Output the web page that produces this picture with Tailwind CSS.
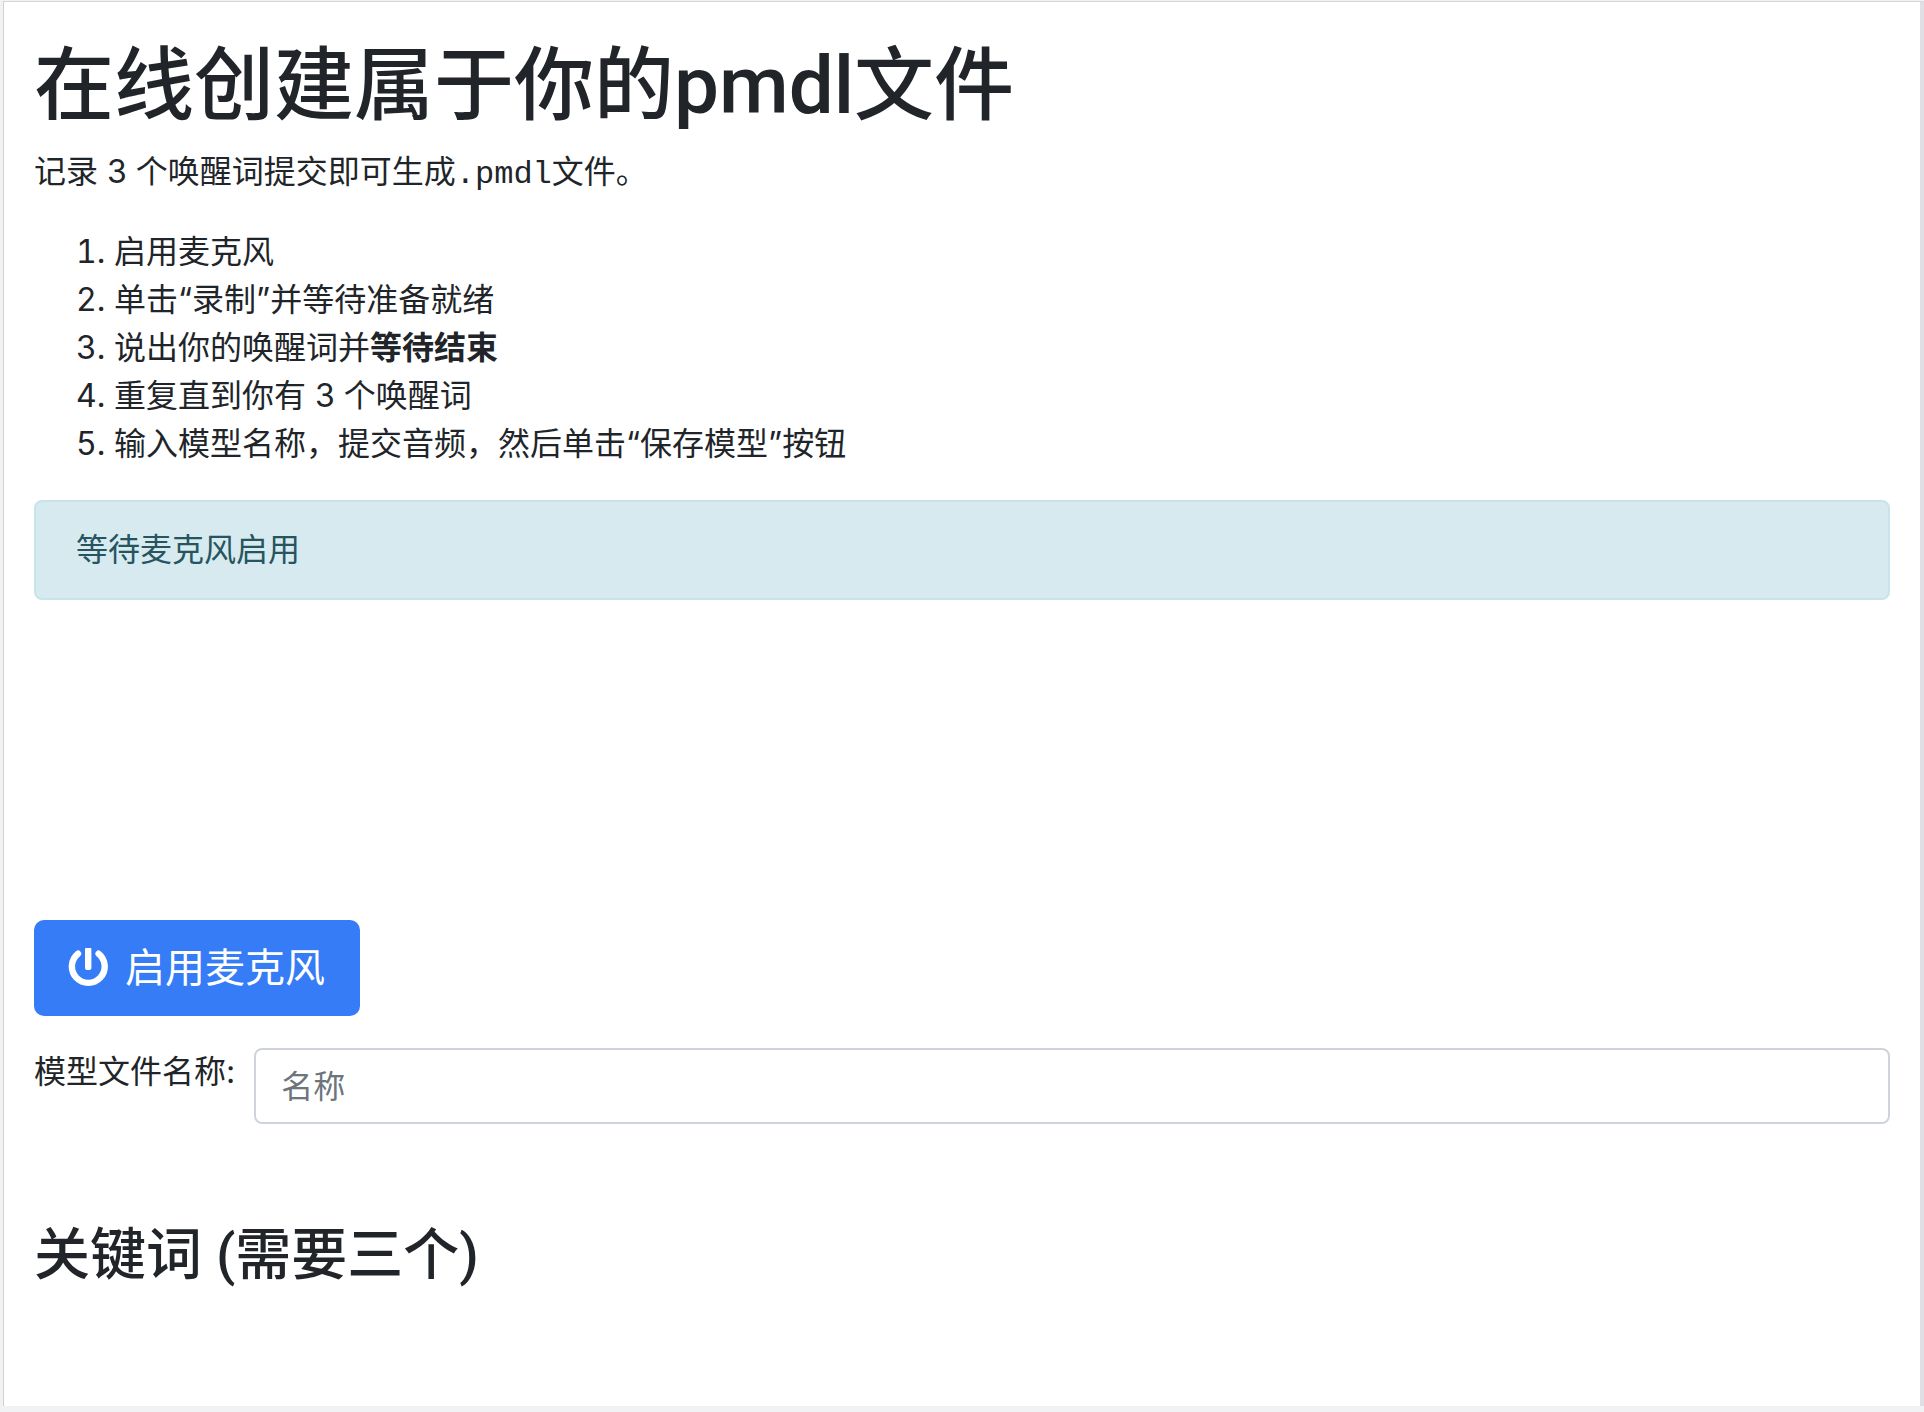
<!DOCTYPE html>
<html lang="zh-CN">
<head>
<meta charset="utf-8">
<title>在线创建属于你的pmdl文件</title>
<script src="https://cdn.jsdelivr.net/npm/@tailwindcss/browser@4"></script>
</head>
<body class="min-h-screen flex flex-col bg-[#f1f2f4] pb-1.5 font-['Inter','Noto_Sans_CJK_SC',sans-serif] text-[32px] leading-[48px] text-[#212529]">
<main class="grow mt-px border-t border-t-[#d4d6d8] border-l border-l-[#d0d0d0] border-r-4 border-r-[#e0e0e4] ml-[3px] bg-white px-[30px] pt-9">
  <h1 class="text-[80px] leading-[96px] font-medium font-['Roboto','Noto_Sans_CJK_SC',sans-serif]">在线创建属于你的pmdl文件</h1>
  <p class="mt-3.5">记录 3 个唤醒词提交即可生成<code class="font-['Liberation_Mono',monospace] leading-none">.pmdl</code>文件。</p>
  <ol class="mt-8 list-decimal pl-20">
    <li>启用麦克风</li>
    <li>单击“录制”并等待准备就绪</li>
    <li>说出你的唤醒词并<strong class="font-bold">等待结束</strong></li>
    <li>重复直到你有 3 个唤醒词</li>
    <li>输入模型名称，提交音频，然后单击“保存模型”按钮</li>
  </ol>
  <div role="status" class="mt-8 rounded-lg border-2 border-[#c6e4ea] bg-[#d6eaef] px-10 py-6 text-[#27555f]">等待麦克风启用</div>
  <button type="button" class="mt-80 flex items-center gap-[17px] rounded-[10px] bg-[#357cf6] pl-[34px] pr-[35px] py-[18px] text-[40px] leading-[60px] text-white">
    <svg class="size-10" viewBox="0 0 40 40" fill="none" aria-hidden="true">
      <path d="M10 5.7a16.4 16.4 0 1 0 20.6 0" stroke="currentColor" stroke-width="6.4" stroke-linecap="round"/>
      <rect x="17" y="-1" width="6.4" height="23" rx="2.6" fill="currentColor"/>
    </svg>
    启用麦克风
  </button>
  <div class="mt-8 flex items-start gap-[19px]">
    <label for="model-name" class="shrink-0">模型文件名称:</label>
    <input id="model-name" type="text" placeholder="名称" class="h-[76px] min-w-0 grow rounded-lg border-2 border-[#ced4da] bg-white px-[25px] placeholder:text-[#6c757d]">
  </div>
  <h2 class="mt-24 text-[56px] leading-[70px] font-medium font-['Roboto','Noto_Sans_CJK_SC',sans-serif]">关键词 (需要三个)</h2>
</main>
</body>
</html>
